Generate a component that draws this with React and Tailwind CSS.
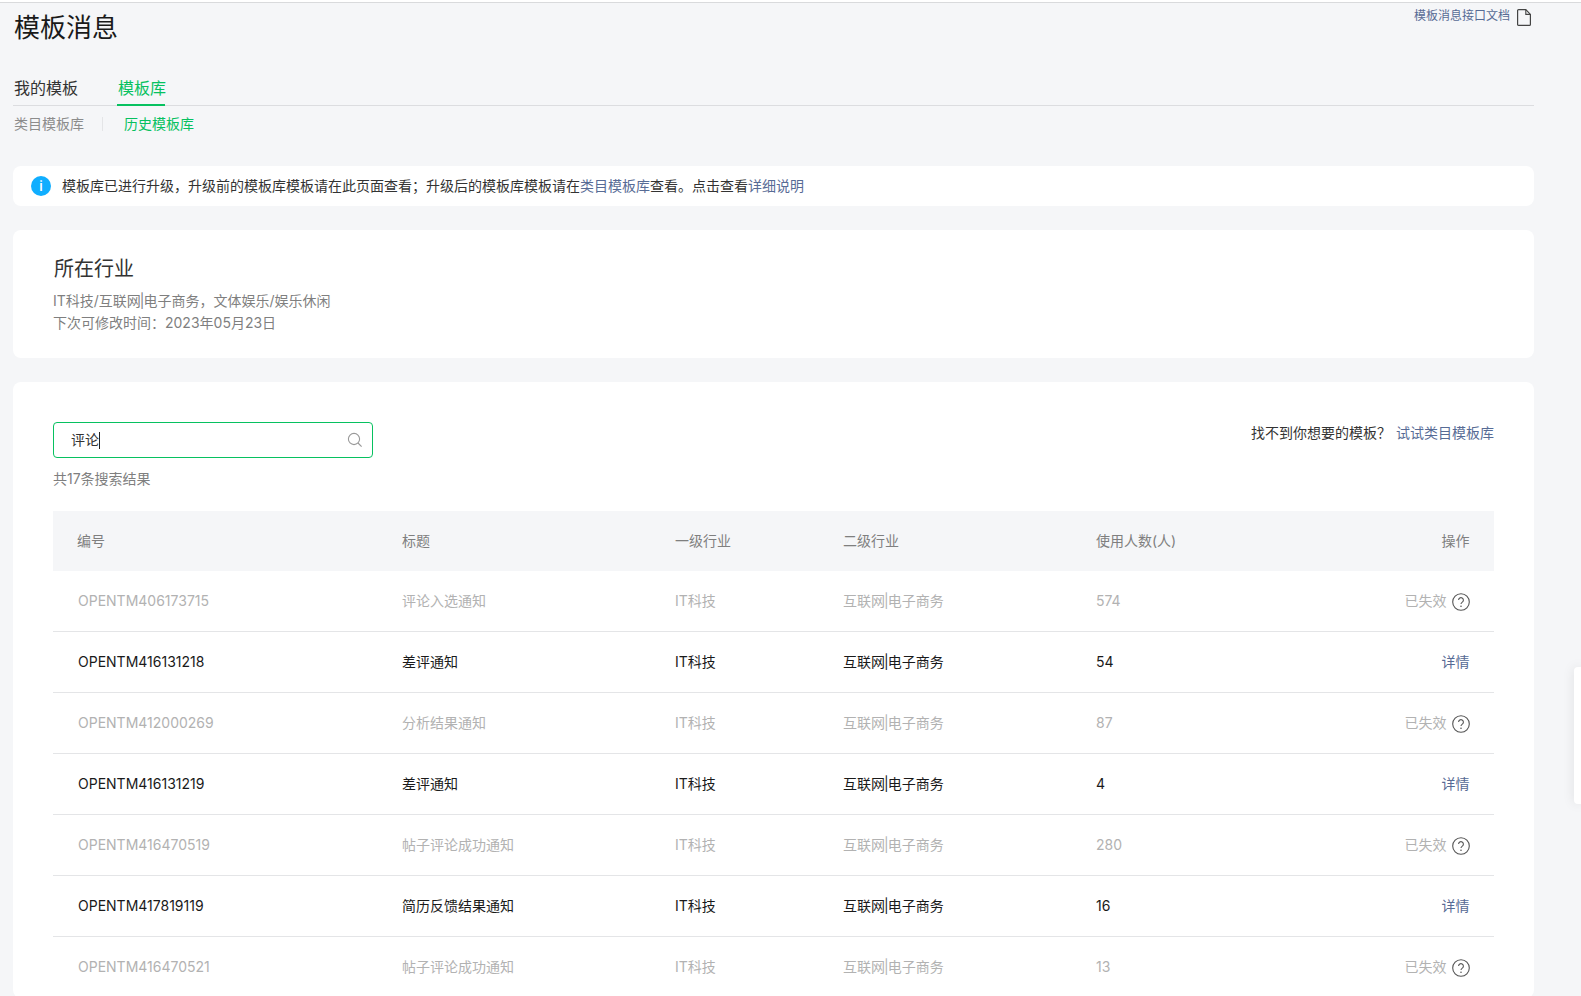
import React from "react";

const rows = [
  ["OPENTM406173715", "评论入选通知", "574", true],
  ["OPENTM416131218", "差评通知", "54", false],
  ["OPENTM412000269", "分析结果通知", "87", true],
  ["OPENTM416131219", "差评通知", "4", false],
  ["OPENTM416470519", "帖子评论成功通知", "280", true],
  ["OPENTM417819119", "简历反馈结果通知", "16", false],
  ["OPENTM416470521", "帖子评论成功通知", "13", true],
];

function Help() {
  return (
    <svg width="18" height="18" viewBox="0 0 18 18" fill="none" className="ml-[5px] mt-[2px]">
      <circle cx="9" cy="9" r="8.3" stroke="#555" strokeWidth="1.1" />
      <path d="M6.6 7.1a2.4 2.4 0 1 1 3.7 2c-.9.6-1.3 1-1.3 2" stroke="#555" strokeWidth="1.1" fill="none" />
      <circle cx="9" cy="13.2" r=".8" fill="#555" />
    </svg>
  );
}

function Row({ r }) {
  const [id, title, n, off] = r;
  return (
    <div className={`grid grid-cols-[324px_273px_168px_253px_1fr] items-center h-[61px] pl-[25px] pr-[24.5px] border-b border-[#e4e5e7] text-sm ${off ? "text-[#b2b2b2]" : "text-[#1a1a1a]"}`}>
      <div>{id}</div>
      <div>{title}</div>
      <div>IT科技</div>
      <div>互联网<span className="ml-[-1px] tracking-[-1px]">|</span>电子商务</div>
      <div className="flex items-center justify-between">
        <span>{n}</span>
        {off ? (
          <span className="flex items-center"><span>已失效</span><Help /></span>
        ) : (
          <span className="text-[#576b95]">详情</span>
        )}
      </div>
    </div>
  );
}

export default function App() {
  return (
    <div className="relative h-[996px] overflow-hidden bg-[#f5f6f8] font-['Inter','Noto_Sans_CJK_SC',sans-serif] text-[#1a1a1a]">
      <div className="h-[3px] bg-white border-b border-[#d9dadc]"></div>
      <div className="pl-[13px] w-[1534px]">
        <div className="flex justify-between items-start">
          <h1 className="text-[26px] leading-[36px] mt-[7px] ml-[1px] text-[#1a1a1a]">模板消息</h1>
          <div className="flex items-start mt-[4px] mr-[3px]">
            <span className="text-xs leading-[18px] text-[#576b95]">模板消息接口文档</span>
            <svg width="14" height="17" viewBox="0 0 14 17" fill="none" className="ml-[7px] mt-[2px]">
              <path d="M.6 1.6C.6 1 1 .6 1.6.6h7.2l4.6 4.8v10c0 .6-.4 1-1 1H1.6c-.6 0-1-.4-1-1V1.6Z" stroke="#444" strokeWidth="1.2" />
              <path d="M8.8.8v4.6h4.5" stroke="#444" strokeWidth="1.1" />
            </svg>
          </div>
        </div>
        <div className="flex mt-[27px] h-[33px] border-b border-[#dcdde0] text-base">
          <div className="w-[104px] pl-[1px] pt-[3px] leading-[24px] text-[#333]">我的模板</div>
          <div className="h-[33px] w-[48px] pl-[1px] pt-[3px] leading-[24px] whitespace-nowrap text-[#07c160] border-b-2 border-[#07c160]">模板库</div>
        </div>
        <div className="flex items-center mt-[8px] h-[20px] pl-[1px] text-sm">
          <span className="text-[#8c8c8c]">类目模板库</span>
          <span className="w-px h-[14px] bg-[#e4e5e7] ml-[18px] mr-[21px]"></span>
          <span className="text-[#07c160]">历史模板库</span>
        </div>
        <div className="flex items-center h-[40px] mt-[32px] pl-[18px] bg-white rounded-lg text-sm text-[#333]">
          <span className="w-5 h-5 rounded-full bg-[#10aeff] text-white flex items-center justify-center text-[13px] font-semibold mr-[11px]">i</span>
          <span>模板库已进行升级，升级前的模板库模板请在此页面查看；升级后的模板库模板请在<span className="text-[#576b95]">类目模板库</span>查看。点击查看<span className="text-[#576b95]">详细说明</span></span>
        </div>
        <div className="h-[128px] mt-[24px] pt-[25px] pl-[40px] bg-white rounded-lg">
          <div className="text-xl leading-[28px] ml-[1px] text-[#333]">所在行业</div>
          <div className="mt-[7px] text-sm leading-[22px] text-[#7f7f7f]">IT科技/互联网<span className="ml-[-1px] tracking-[-1px]">|</span>电子商务，文体娱乐/娱乐休闲</div>
          <div className="text-sm leading-[22px] text-[#7f7f7f]">下次可修改时间：2023年05月23日</div>
        </div>
        <div className="mt-[24px] pt-[40px] px-[40px] bg-white rounded-lg">
          <div className="flex justify-between items-start">
            <div className="relative flex items-center w-[320px] h-[36px] pl-[17px] border border-[#07c160] rounded text-sm text-[#333]">
              <span>评论</span>
              <span className="w-px h-[17px] bg-[#222]"></span>
              <svg width="16" height="16" viewBox="0 0 16 16" fill="none" className="absolute right-[9px] top-[9px]">
                <circle cx="7" cy="7" r="5.6" stroke="#999" strokeWidth="1.1" />
                <path d="M11 11l3.6 3.6" stroke="#999" strokeWidth="1.1" />
              </svg>
            </div>
            <div className="text-sm leading-[20px] mt-[1px] text-[#333]">找不到你想要的模板？<span className="ml-[5px] text-[#576b95]">试试类目模板库</span></div>
          </div>
          <div className="mt-[11px] text-sm leading-[20px] text-[#7f7f7f]">共17条搜索结果</div>
          <div className="mt-[22px] grid grid-cols-[324px_273px_168px_253px_1fr] items-center h-[60px] pl-[25px] pr-[24.5px] bg-[#f5f6f8] text-sm text-[#7f7f7f]">
            <div className="ml-[-1px]">编号</div>
            <div>标题</div>
            <div>一级行业</div>
            <div>二级行业</div>
            <div className="flex justify-between"><span>使用人数(人)</span><span>操作</span></div>
          </div>
          {rows.map((r) => <Row key={r[0]} r={r} />)}
        </div>
      </div>
      <div className="absolute right-0 top-[667px] w-[7px] h-[137px] bg-white rounded-l shadow-[0_0_12px_rgba(0,0,0,0.1)]"></div>
    </div>
  );
}
